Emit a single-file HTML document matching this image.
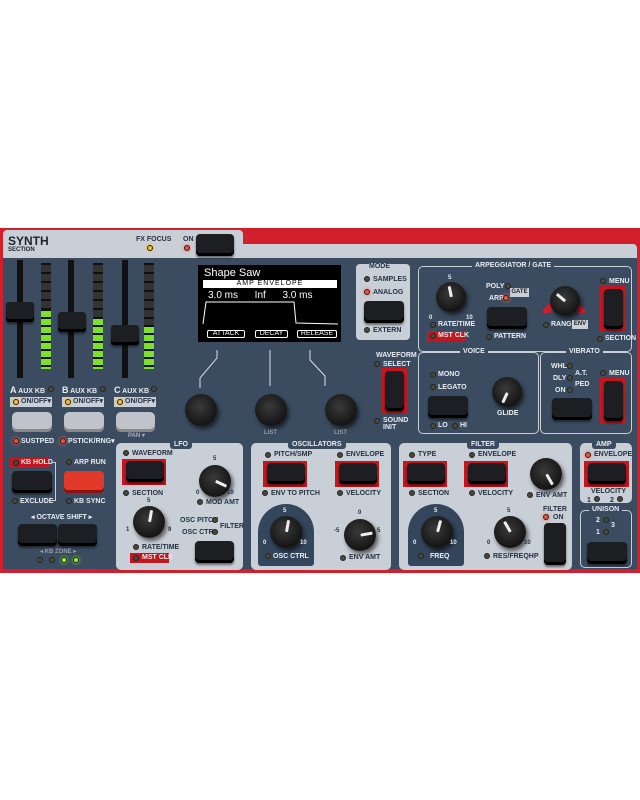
<!DOCTYPE html>
<html><head><meta charset="utf-8"><style>
*{margin:0;padding:0;box-sizing:border-box}
body{width:640px;height:800px;background:#fff;position:relative;overflow:hidden;font-family:"Liberation Sans",sans-serif;font-weight:bold}
.a{position:absolute}
.red{background:#d11f2b}
.blue{background:#3b4c60}
.lg{background:#c9cfd7}
.t{position:absolute;font-size:7px;color:#e8ecf0;white-space:nowrap;line-height:8px}
.d{color:#243244}
.led{position:absolute;width:6px;height:6px;border-radius:50%;background:#4a4a3a;border:1px solid #222}
.on{background:#ff4a3a;box-shadow:0 0 4px #ff6a50}
.yl{background:#ffc030;box-shadow:0 0 4px #ffb020}
.gr{background:#9cf03a;box-shadow:0 0 3px #8f0}
.btn{position:absolute;background:#1c1e22;border-radius:4px;box-shadow:inset 0 -3px 0 #000,0 2px 2px rgba(0,0,0,.5)}
.rb{position:absolute;background:#c4161f}
.knob{position:absolute;border-radius:50%;background:radial-gradient(circle at 45% 40%,#3a3a3a,#151515 70%);box-shadow:2px 3px 4px rgba(0,0,0,.6)}
.knob.p::after{content:"";position:absolute;left:calc(50% - 1.5px);top:12%;width:3px;height:38%;background:#eee;border-radius:1px;transform-origin:50% 100%;transform:rotate(var(--r,0deg))}
.gb{position:absolute;background:#c0c4ca;border-radius:5px;box-shadow:inset 0 -3px 0 #888}
.meter{position:absolute;width:10px;background:#111}
.box{position:absolute;border:1px solid #c9cfd7;border-radius:5px}
.sc{position:absolute;font-size:6px;color:#e8ecf0;line-height:6px}
.sd{color:#243244}
</style></head><body>
<div class="a red" style="left:0;top:228px;width:640px;height:345px"></div>
<div class="a lg" style="left:3px;top:230px;width:240px;height:30px;border-radius:4px 4px 0 0"></div>
<div class="a lg" style="left:240px;top:244px;width:397px;height:16px;border-radius:0 4px 0 0"></div>
<div class="a blue" style="left:3px;top:258px;width:634px;height:311px"></div>
<div class="a" style="left:8px;top:234px;font-size:12px;color:#1d2530">SYNTH</div>
<div class="a" style="left:8px;top:247px;font-size:6px;color:#1d2530">SECTION</div>
<div class="t d" style="left:136px;top:236px">FX FOCUS</div>
<div class="led yl" style="left:147px;top:245px"></div>
<div class="t d" style="left:183px;top:236px">ON</div>
<div class="led on" style="left:184px;top:245px"></div>
<div class="btn" style="left:196px;top:234px;width:38px;height:22px"></div>
<!-- faders -->
<div class="a" style="left:17px;top:260px;width:6px;height:118px;background:#111"></div>
<div class="a" style="left:68px;top:260px;width:6px;height:118px;background:#111"></div>
<div class="a" style="left:122px;top:260px;width:6px;height:118px;background:#111"></div>
<div class="btn" style="left:6px;top:302px;width:28px;height:20px;border-radius:3px"></div>
<div class="btn" style="left:58px;top:312px;width:28px;height:20px;border-radius:3px"></div>
<div class="btn" style="left:111px;top:325px;width:28px;height:20px;border-radius:3px"></div>
<div class="meter" style="left:41px;top:263px;height:106px;background:repeating-linear-gradient(#111 0 2px,#333 2px 9px);"></div>
<div class="meter" style="left:41px;top:309px;height:60px;background:repeating-linear-gradient(#111 0 2px,#7ee02a 2px 8px)"></div>
<div class="meter" style="left:93px;top:263px;height:106px;background:repeating-linear-gradient(#111 0 2px,#333 2px 9px)"></div>
<div class="meter" style="left:93px;top:317px;height:52px;background:repeating-linear-gradient(#111 0 2px,#7ee02a 2px 8px)"></div>
<div class="meter" style="left:144px;top:263px;height:106px;background:repeating-linear-gradient(#111 0 2px,#333 2px 9px)"></div>
<div class="meter" style="left:144px;top:325px;height:44px;background:repeating-linear-gradient(#111 0 2px,#7ee02a 2px 8px)"></div>
<div class="t" style="left:10px;top:386px"><span style="font-size:9px">A</span> AUX KB</div>
<div class="t" style="left:62px;top:386px"><span style="font-size:9px">B</span> AUX KB</div>
<div class="t" style="left:114px;top:386px"><span style="font-size:9px">C</span> AUX KB</div>
<div class="led" style="left:48px;top:386px"></div><div class="led" style="left:100px;top:386px"></div><div class="led" style="left:151px;top:386px"></div>
<div class="a lg" style="left:10px;top:397px;width:42px;height:10px"></div>
<div class="a lg" style="left:62px;top:397px;width:42px;height:10px"></div>
<div class="a lg" style="left:114px;top:397px;width:42px;height:10px"></div>
<div class="led yl" style="left:13px;top:399px"></div><div class="led yl" style="left:65px;top:399px"></div><div class="led yl" style="left:117px;top:399px"></div>
<div class="t d" style="left:21px;top:398px">ON/OFF▾</div><div class="t d" style="left:73px;top:398px">ON/OFF▾</div><div class="t d" style="left:125px;top:398px">ON/OFF▾</div>
<div class="gb" style="left:12px;top:412px;width:40px;height:20px"></div>
<div class="gb" style="left:64px;top:412px;width:40px;height:20px"></div>
<div class="gb" style="left:116px;top:412px;width:39px;height:20px"></div>
<div class="led on" style="left:13px;top:438px"></div><div class="t" style="left:21px;top:438px">SUSTPED</div>
<div class="led on" style="left:60px;top:438px"></div><div class="t" style="left:68px;top:438px">PSTICK/RNG▾</div>
<div class="t" style="left:128px;top:432px;font-size:6px;color:#aab">PAN ▾</div>
<div class="a" style="left:10px;top:458px;width:40px;height:10px;background:#c4161f"></div>
<div class="led" style="left:13px;top:460px"></div><div class="t" style="left:21px;top:459px">KB HOLD</div>
<div class="btn" style="left:12px;top:471px;width:40px;height:22px"></div>
<div class="led" style="left:12px;top:498px"></div><div class="t" style="left:20px;top:498px">EXCLUDE</div>
<div class="a" style="left:52px;top:462px;width:4px;height:39px;border:1px solid #ccd;border-left:none"></div>
<div class="led" style="left:66px;top:459px"></div><div class="t" style="left:74px;top:459px">ARP RUN</div>
<div class="a" style="left:64px;top:471px;width:40px;height:22px;background:#e23a2a;border-radius:4px;box-shadow:inset 0 -3px 0 #901010"></div>
<div class="led" style="left:66px;top:498px"></div><div class="t" style="left:74px;top:498px">KB SYNC</div>
<div class="t" style="left:31px;top:514px">◂ OCTAVE SHIFT ▸</div>
<div class="btn" style="left:18px;top:524px;width:39px;height:22px"></div>
<div class="btn" style="left:58px;top:524px;width:39px;height:22px"></div>
<div class="t" style="left:40px;top:548px;font-size:6px;color:#99a">◂ KB ZONE ▸</div>
<div class="led" style="left:37px;top:557px"></div><div class="led" style="left:49px;top:557px"></div>
<div class="led gr" style="left:61px;top:557px"></div><div class="led gr" style="left:73px;top:557px"></div>
<!-- display -->
<div class="a" style="left:198px;top:265px;width:143px;height:77px;background:#000"></div>
<div class="a" style="left:204px;top:267px;font-size:11px;color:#fff;font-weight:normal">Shape Saw</div>
<div class="a" style="left:203px;top:280px;width:134px;height:8px;background:#fff;color:#000;font-size:7px;text-align:center;line-height:8px;font-weight:normal;letter-spacing:1px">AMP ENVELOPE</div>
<div class="a" style="left:208px;top:290px;font-size:10px;color:#fff;font-weight:normal;word-spacing:0">3.0 ms&nbsp;&nbsp;&nbsp;&nbsp;&nbsp;&nbsp;Inf&nbsp;&nbsp;&nbsp;&nbsp;&nbsp;&nbsp;3.0 ms</div>
<svg class="a" style="left:198px;top:265px" width="143" height="77"><path d="M5 59 L8 37 L96 37 L98 58 L140 59" stroke="#fff" fill="none"/></svg>
<div class="a" style="left:207px;top:330px;width:38px;height:8px;border:1px solid #fff;border-radius:2px;font-size:7px;color:#fff;text-align:center;line-height:6px;font-weight:normal">ATTACK</div>
<div class="a" style="left:255px;top:330px;width:33px;height:8px;border:1px solid #fff;border-radius:2px;font-size:7px;color:#fff;text-align:center;line-height:6px;font-weight:normal">DECAY</div>
<div class="a" style="left:297px;top:330px;width:40px;height:8px;border:1px solid #fff;border-radius:2px;font-size:7px;color:#fff;text-align:center;line-height:6px;font-weight:normal">RELEASE</div>
<svg class="a" style="left:195px;top:348px" width="150" height="45"><path d="M22 2 L22 10 L5 30 L5 40 M75 2 L75 38 M115 2 L115 12 L130 28 L130 38" stroke="#dde" fill="none"/></svg>
<div class="knob" style="left:185px;top:394px;width:32px;height:32px"></div>
<div class="knob" style="left:255px;top:394px;width:32px;height:32px"></div>
<div class="knob" style="left:325px;top:394px;width:32px;height:32px"></div>
<div class="t" style="left:264px;top:429px;font-size:6px;color:#99a">LIST</div>
<div class="t" style="left:334px;top:429px;font-size:6px;color:#99a">LIST</div>
<!-- mode -->
<div class="a lg" style="left:356px;top:264px;width:54px;height:76px;border-radius:4px"></div>
<div class="t d" style="left:369px;top:263px;background:#c9cfd7;font-size:7px">MODE</div>
<div class="led" style="left:364px;top:276px"></div><div class="t d" style="left:373px;top:276px">SAMPLES</div>
<div class="led on" style="left:364px;top:289px"></div><div class="t d" style="left:373px;top:289px">ANALOG</div>
<div class="btn" style="left:364px;top:301px;width:40px;height:22px"></div>
<div class="led" style="left:364px;top:327px"></div><div class="t d" style="left:373px;top:327px">EXTERN</div>
<div class="t" style="left:376px;top:352px">WAVEFORM</div>
<div class="led" style="left:374px;top:361px"></div><div class="t" style="left:383px;top:361px">SELECT</div>
<div class="rb" style="left:381px;top:368px;width:26px;height:46px"></div>
<div class="btn" style="left:385px;top:371px;width:19px;height:40px"></div>
<div class="led" style="left:374px;top:418px"></div><div class="t" style="left:383px;top:417px;line-height:7px">SOUND<br>INIT</div>
<!-- arp/voice/vibrato -->
<div class="box" style="left:418px;top:266px;width:214px;height:86px"></div>
<div class="t" style="left:472px;top:262px;background:#3b4c60;padding:0 3px">ARPEGGIATOR / GATE</div>
<div class="box" style="left:418px;top:352px;width:121px;height:82px"></div>
<div class="box" style="left:540px;top:352px;width:92px;height:82px"></div>
<div class="t" style="left:460px;top:348px;background:#3b4c60;padding:0 3px">VOICE</div>
<div class="t" style="left:566px;top:348px;background:#3b4c60;padding:0 3px">VIBRATO</div>
<div class="knob p" style="--r:-12deg;left:436px;top:282px;width:30px;height:30px"></div>
<div class="sc" style="left:429px;top:315px">0</div><div class="sc" style="left:466px;top:315px">10</div>
<div class="sc" style="left:448px;top:275px">5</div>
<div class="led" style="left:430px;top:322px"></div><div class="t" style="left:438px;top:321px">RATE/TIME</div>
<div class="a" style="left:427px;top:331px;width:38px;height:10px;background:#c4161f"></div>
<div class="led" style="left:430px;top:333px"></div><div class="t" style="left:438px;top:332px">MST CLK</div>
<div class="t" style="left:486px;top:283px">POLY</div><div class="led" style="left:505px;top:283px"></div>
<div class="a lg" style="left:510px;top:288px;width:19px;height:9px;font-size:6px;color:#222;text-align:center;line-height:9px">GATE</div>
<div class="t" style="left:489px;top:295px">ARP</div><div class="led on" style="left:503px;top:295px"></div>
<div class="btn" style="left:487px;top:307px;width:40px;height:22px"></div>
<div class="led" style="left:486px;top:334px"></div><div class="t" style="left:494px;top:333px">PATTERN</div>
<svg class="a" style="left:538px;top:277px" width="52" height="38"><path d="M4 36 A24 24 0 0 1 48 36 L40 36 A16 16 0 0 0 12 36Z" fill="#d11f2b"/></svg>
<div class="knob p" style="--r:-50deg;left:550px;top:286px;width:30px;height:30px"></div>
<div class="led" style="left:543px;top:322px"></div><div class="t" style="left:551px;top:321px">RANGE</div>
<div class="a lg" style="left:572px;top:320px;width:16px;height:9px;font-size:6px;color:#222;text-align:center;line-height:9px">ENV</div>
<div class="led" style="left:600px;top:278px"></div><div class="t" style="left:609px;top:278px">MENU</div>
<div class="rb" style="left:600px;top:286px;width:26px;height:46px"></div>
<div class="btn" style="left:604px;top:289px;width:19px;height:40px"></div>
<div class="led" style="left:597px;top:336px"></div><div class="t" style="left:605px;top:335px">SECTION</div>
<div class="led" style="left:430px;top:372px"></div><div class="t" style="left:438px;top:371px">MONO</div>
<div class="led" style="left:430px;top:384px"></div><div class="t" style="left:438px;top:384px">LEGATO</div>
<div class="btn" style="left:428px;top:396px;width:40px;height:22px"></div>
<div class="led" style="left:430px;top:423px"></div><div class="t" style="left:438px;top:422px">LO</div>
<div class="led" style="left:452px;top:423px"></div><div class="t" style="left:460px;top:422px">HI</div>
<div class="knob p" style="--r:-155deg;left:492px;top:377px;width:30px;height:30px"></div>
<div class="t" style="left:497px;top:410px">GLIDE</div>
<div class="t" style="left:551px;top:363px">WHL</div><div class="led" style="left:567px;top:363px"></div>
<div class="t" style="left:575px;top:370px">A.T.</div>
<div class="t" style="left:553px;top:375px">DLY</div><div class="led" style="left:567px;top:375px"></div>
<div class="t" style="left:575px;top:381px">PED</div>
<div class="t" style="left:555px;top:387px">ON</div><div class="led" style="left:567px;top:387px"></div>
<div class="btn" style="left:552px;top:398px;width:40px;height:22px"></div>
<div class="led" style="left:600px;top:370px"></div><div class="t" style="left:609px;top:370px">MENU</div>
<div class="rb" style="left:600px;top:378px;width:26px;height:46px"></div>
<div class="btn" style="left:604px;top:381px;width:19px;height:40px"></div>
<!-- LFO -->
<div class="a lg" style="left:116px;top:443px;width:127px;height:127px;border-radius:5px"></div>
<div class="t" style="left:170px;top:441px;background:#3b4c60;padding:0 4px;border-radius:0 0 3px 3px">LFO</div>
<div class="led" style="left:123px;top:450px"></div><div class="t d" style="left:132px;top:450px">WAVEFORM</div>
<div class="rb" style="left:122px;top:459px;width:44px;height:26px"></div>
<div class="btn" style="left:126px;top:461px;width:38px;height:21px"></div>
<div class="led" style="left:123px;top:490px"></div><div class="t d" style="left:132px;top:490px">SECTION</div>
<div class="knob p" style="--r:115deg;left:199px;top:465px;width:32px;height:32px"></div>
<div class="sc sd" style="left:213px;top:456px">5</div><div class="sc sd" style="left:196px;top:490px">0</div><div class="sc sd" style="left:227px;top:490px">10</div>
<div class="led" style="left:197px;top:499px"></div><div class="t d" style="left:206px;top:499px">MOD AMT</div>
<div class="knob p" style="--r:10deg;left:133px;top:506px;width:32px;height:32px"></div>
<div class="sc sd" style="left:147px;top:498px">5</div><div class="sc sd" style="left:126px;top:527px">1</div><div class="sc sd" style="left:168px;top:527px">9</div>
<div class="led" style="left:133px;top:544px"></div><div class="t d" style="left:142px;top:544px">RATE/TIME</div>
<div class="a" style="left:130px;top:553px;width:39px;height:10px;background:#c4161f"></div>
<div class="led" style="left:133px;top:555px"></div><div class="t" style="left:142px;top:554px">MST CLK</div>
<div class="t d" style="left:180px;top:517px">OSC PITCH</div><div class="led" style="left:212px;top:517px"></div>
<div class="t d" style="left:182px;top:529px">OSC CTRL</div><div class="led" style="left:212px;top:529px"></div>
<div class="t d" style="left:220px;top:523px">FILTER</div>
<div class="btn" style="left:195px;top:541px;width:39px;height:22px"></div>
<!-- OSC -->
<div class="a lg" style="left:251px;top:443px;width:140px;height:127px;border-radius:5px"></div>
<div class="t" style="left:288px;top:441px;background:#3b4c60;padding:0 4px;border-radius:0 0 3px 3px">OSCILLATORS</div>
<div class="led" style="left:265px;top:452px"></div><div class="t d" style="left:274px;top:451px">PITCH/SMP</div>
<div class="rb" style="left:263px;top:461px;width:44px;height:26px"></div>
<div class="btn" style="left:267px;top:463px;width:38px;height:21px"></div>
<div class="led" style="left:262px;top:490px"></div><div class="t d" style="left:271px;top:490px">ENV TO PITCH</div>
<div class="a" style="left:258px;top:504px;width:56px;height:62px;border-radius:28px 28px 3px 3px;background:#33465c"></div>
<div class="knob p" style="--r:10deg;left:270px;top:516px;width:32px;height:32px"></div>
<div class="sc" style="left:283px;top:508px">5</div><div class="sc" style="left:263px;top:540px">0</div><div class="sc" style="left:300px;top:540px">10</div>
<div class="led" style="left:265px;top:553px"></div><div class="t" style="left:273px;top:553px">OSC CTRL</div>
<div class="led" style="left:337px;top:452px"></div><div class="t d" style="left:346px;top:451px">ENVELOPE</div>
<div class="rb" style="left:335px;top:461px;width:44px;height:26px"></div>
<div class="btn" style="left:339px;top:463px;width:38px;height:21px"></div>
<div class="led" style="left:337px;top:490px"></div><div class="t d" style="left:346px;top:490px">VELOCITY</div>
<div class="knob p" style="--r:80deg;left:344px;top:519px;width:32px;height:32px"></div>
<div class="sc sd" style="left:358px;top:510px">0</div><div class="sc sd" style="left:334px;top:528px">-5</div><div class="sc sd" style="left:377px;top:528px">5</div>
<div class="led" style="left:340px;top:555px"></div><div class="t d" style="left:349px;top:554px">ENV AMT</div>
<!-- FILTER -->
<div class="a lg" style="left:399px;top:443px;width:173px;height:127px;border-radius:5px"></div>
<div class="t" style="left:467px;top:441px;background:#3b4c60;padding:0 4px;border-radius:0 0 3px 3px">FILTER</div>
<div class="led" style="left:409px;top:452px"></div><div class="t d" style="left:418px;top:451px">TYPE</div>
<div class="rb" style="left:403px;top:461px;width:44px;height:26px"></div>
<div class="btn" style="left:407px;top:463px;width:38px;height:21px"></div>
<div class="led" style="left:409px;top:490px"></div><div class="t d" style="left:418px;top:490px">SECTION</div>
<div class="led" style="left:469px;top:452px"></div><div class="t d" style="left:478px;top:451px">ENVELOPE</div>
<div class="rb" style="left:464px;top:461px;width:44px;height:26px"></div>
<div class="btn" style="left:468px;top:463px;width:38px;height:21px"></div>
<div class="led" style="left:469px;top:490px"></div><div class="t d" style="left:478px;top:490px">VELOCITY</div>
<div class="knob p" style="--r:150deg;left:530px;top:458px;width:32px;height:32px"></div>
<div class="led" style="left:527px;top:492px"></div><div class="t d" style="left:536px;top:492px">ENV AMT</div>
<div class="a" style="left:408px;top:504px;width:56px;height:62px;border-radius:28px 28px 3px 3px;background:#33465c"></div>
<div class="knob p" style="--r:15deg;left:421px;top:516px;width:32px;height:32px"></div>
<div class="sc" style="left:434px;top:508px">5</div><div class="sc" style="left:413px;top:540px">0</div><div class="sc" style="left:450px;top:540px">10</div>
<div class="led" style="left:418px;top:553px"></div><div class="t" style="left:430px;top:553px">FREQ</div>
<div class="knob p" style="--r:-30deg;left:494px;top:516px;width:32px;height:32px"></div>
<div class="sc sd" style="left:507px;top:508px">5</div><div class="sc sd" style="left:487px;top:540px">0</div><div class="sc sd" style="left:524px;top:540px">10</div>
<div class="led" style="left:484px;top:553px"></div><div class="t d" style="left:493px;top:553px">RES/FREQHP</div>
<div class="t d" style="left:543px;top:506px">FILTER</div>
<div class="led on" style="left:543px;top:514px"></div><div class="t d" style="left:553px;top:514px">ON</div>
<div class="btn" style="left:544px;top:523px;width:22px;height:42px"></div>
<!-- AMP -->
<div class="a lg" style="left:580px;top:443px;width:52px;height:60px;border-radius:5px"></div>
<div class="t" style="left:592px;top:441px;background:#3b4c60;padding:0 4px;border-radius:0 0 3px 3px">AMP</div>
<div class="led on" style="left:585px;top:452px"></div><div class="t d" style="left:594px;top:451px">ENVELOPE</div>
<div class="rb" style="left:584px;top:461px;width:45px;height:26px"></div>
<div class="btn" style="left:588px;top:463px;width:38px;height:21px"></div>
<div class="t d" style="left:591px;top:488px">VELOCITY</div>
<div class="t d" style="left:587px;top:497px">1</div><div class="led" style="left:594px;top:496px"></div>
<div class="t d" style="left:610px;top:497px">2</div><div class="led" style="left:617px;top:496px"></div>
<div class="box" style="left:580px;top:510px;width:52px;height:58px"></div>
<div class="t" style="left:589px;top:506px;background:#3b4c60;padding:0 3px">UNISON</div>
<div class="t" style="left:596px;top:517px">2</div><div class="led" style="left:603px;top:517px"></div>
<div class="t" style="left:611px;top:522px">3</div>
<div class="t" style="left:596px;top:529px">1</div><div class="led" style="left:603px;top:529px"></div>
<div class="btn" style="left:587px;top:542px;width:40px;height:22px"></div>
</body></html>
